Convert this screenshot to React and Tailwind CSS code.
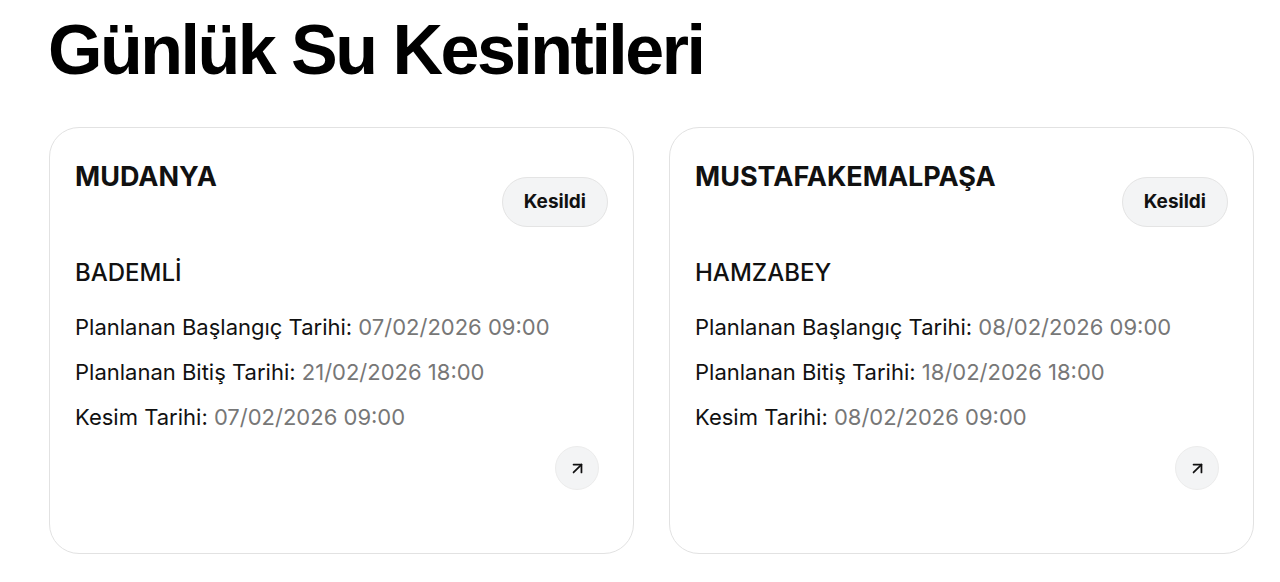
import { ArrowUpRight } from "lucide-react";

const outages = [
  {
    district: "MUDANYA",
    status: "Kesildi",
    neighborhood: "BADEMLİ",
    start: "07/02/2026 09:00",
    end: "21/02/2026 18:00",
    cut: "07/02/2026 09:00",
  },
  {
    district: "MUSTAFAKEMALPAŞA",
    status: "Kesildi",
    neighborhood: "HAMZABEY",
    start: "08/02/2026 09:00",
    end: "18/02/2026 18:00",
    cut: "08/02/2026 09:00",
  },
];

function InfoRow({ label, value }) {
  return (
    <div className="text-[22px] leading-[30px] text-[#111]">
      {label}: <span className="text-[#777]">{value}</span>
    </div>
  );
}

function OutageCard({ item }) {
  return (
    <div className="flex-1 h-[427px] rounded-[30px] border border-[#e2e2e2] bg-white pt-8 px-[25px] flex flex-col">
      <div className="flex justify-between items-start">
        <h2 className="text-[27px] leading-[34px] font-bold text-[#111]">
          {item.district}
        </h2>
        <span className="mt-[17px] h-[50px] px-[21px] flex items-center rounded-full bg-[#f3f4f5] border border-[#e4e4e4] text-[19px] font-bold text-[#111]">
          {item.status}
        </span>
      </div>
      <div className="mt-[30px] text-[24px] leading-8 font-medium text-[#111]">
        {item.neighborhood}
      </div>
      <div className="mt-[23px] flex flex-col gap-[15px]">
        <InfoRow label="Planlanan Başlangıç Tarihi" value={item.start} />
        <InfoRow label="Planlanan Bitiş Tarihi" value={item.end} />
        <InfoRow label="Kesim Tarihi" value={item.cut} />
      </div>
      <div className="mt-[14px] flex justify-end pr-[9px]">
        <button className="w-11 h-11 rounded-full bg-[#f3f4f5] border border-[#ececec] flex items-center justify-center text-[#111]">
          <ArrowUpRight size={19} strokeWidth={2.2} />
        </button>
      </div>
    </div>
  );
}

export default function App() {
  return (
    <div className="min-h-[582px] bg-white pl-[48px] pr-[26px] pt-[15px] font-['Inter','Noto_Sans',sans-serif]">
      <h1 className="font-['Liberation_Sans','Arial',sans-serif] text-[70px] leading-[70px] font-bold tracking-[-2.5px] text-black">
        Günlük Su Kesintileri
      </h1>
      <div className="mt-[42px] flex gap-[35px] pl-px">
        {outages.map((item) => (
          <OutageCard key={item.district} item={item} />
        ))}
      </div>
    </div>
  );
}
